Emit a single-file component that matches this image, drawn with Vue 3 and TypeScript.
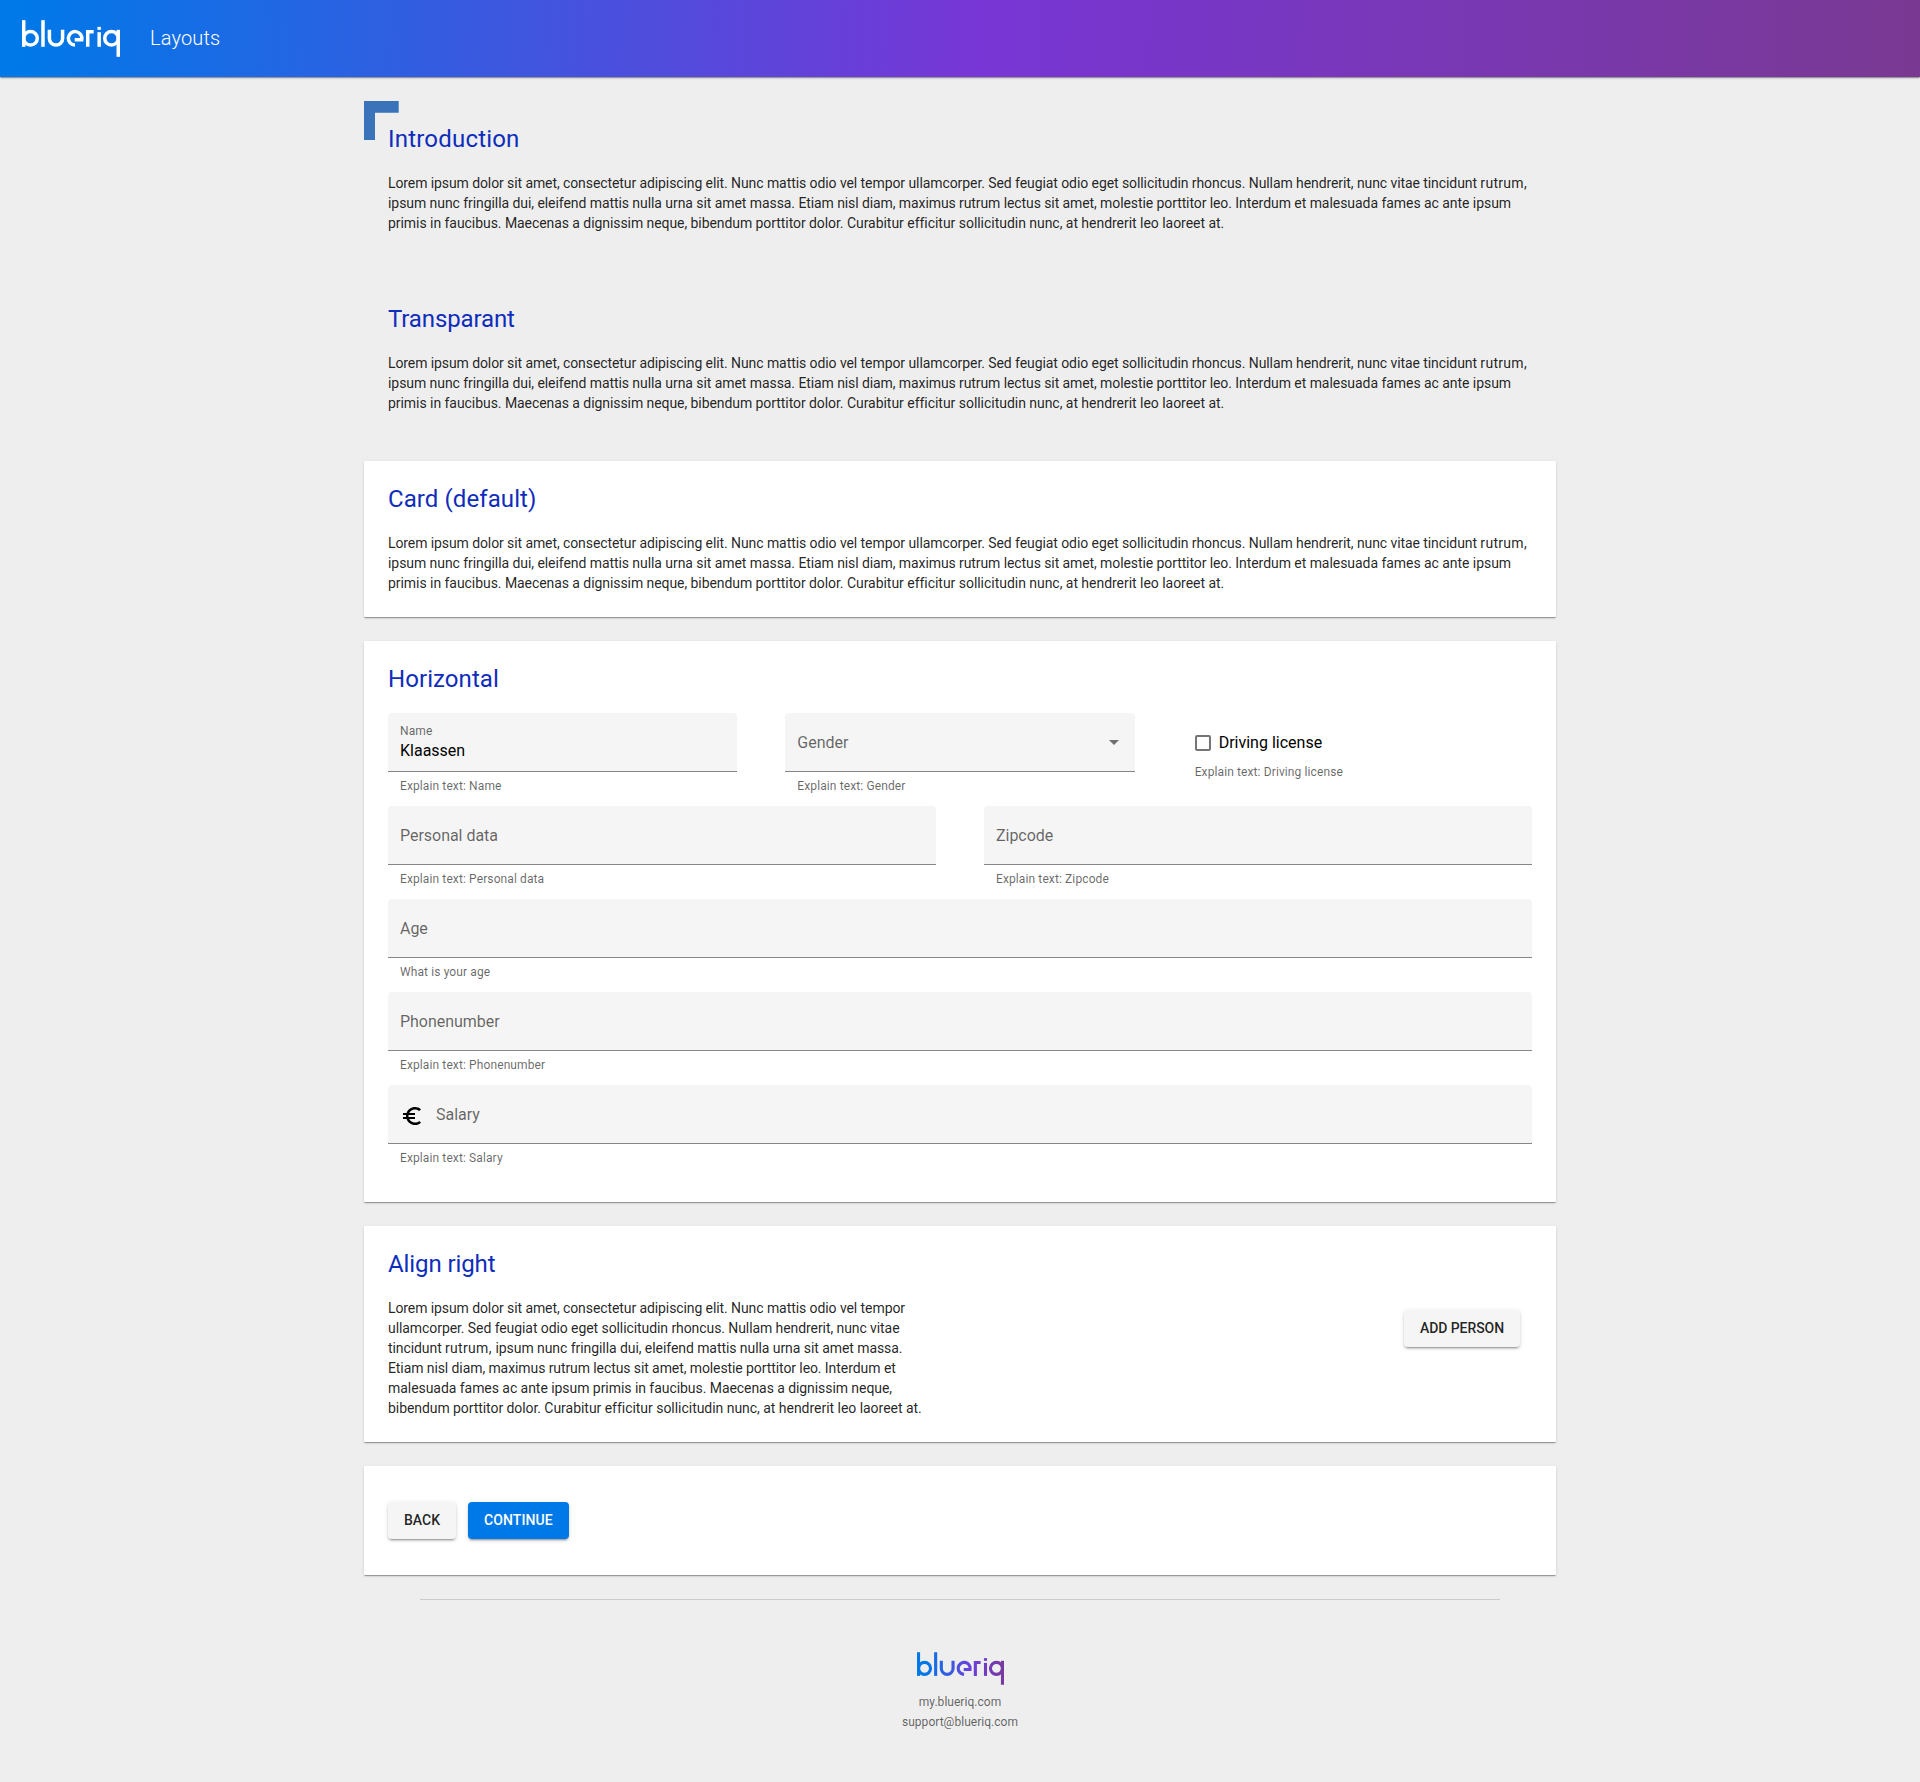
<script setup lang="ts">
interface Field {
  label: string
  hint: string
  value?: string
  kind?: 'select' | 'checkbox' | 'euro'
}

interface Run {
  text: string
  tracking: number
}

// Body copy in short runs, each with its own tracking in pixels.
const lorem: Run[] = [
  { text: 'Lorem ipsum dolor sit amet, consectetur adipiscing elit. ', tracking: -0.092 },
  { text: 'Nunc mattis odio vel tempor ullamcorper. ', tracking: -0.075 },
  { text: 'Sed feugiat odio eget sollicitudin rhoncus. ', tracking: -0.08 },
  { text: 'Nullam hendrerit, nunc vitae tincidunt ', tracking: -0.08 },
  { text: 'rutrum, ', tracking: 0.3 },
  { text: 'ipsum nunc fringilla dui, eleifend mattis nulla urna sit amet massa. ', tracking: -0.066 },
  { text: 'Etiam nisl diam, maximus rutrum lectus sit amet, molestie porttitor leo. ', tracking: -0.09 },
  { text: 'Interdum et malesuada fames ac ante ipsum primis in faucibus. ', tracking: -0.05 },
  { text: 'Maecenas a dignissim neque, bibendum porttitor dolor. ', tracking: -0.068 },
  { text: 'Curabitur efficitur sollicitudin nunc, at hendrerit leo laoreet at.', tracking: -0.033 },
]

const textSections = [
  { title: 'Introduction', style: 'introduction', tracking: 0.2 },
  { title: 'Transparant', style: 'transparent', tracking: -0.13 },
  { title: 'Card (default)', style: 'card', tracking: 0.09 },
]

const rows: Field[][] = [
  [
    { label: 'Name', hint: 'Explain text: Name', value: 'Klaassen' },
    { label: 'Gender', hint: 'Explain text: Gender', kind: 'select' },
    { label: 'Driving license', hint: 'Explain text: Driving license', kind: 'checkbox' },
  ],
  [
    { label: 'Personal data', hint: 'Explain text: Personal data' },
    { label: 'Zipcode', hint: 'Explain text: Zipcode' },
  ],
  [{ label: 'Age', hint: 'What is your age' }],
  [{ label: 'Phonenumber', hint: 'Explain text: Phonenumber' }],
  [{ label: 'Salary', hint: 'Explain text: Salary', kind: 'euro' }],
]
</script>

<template>
  <svg class="defs" width="0" height="0" aria-hidden="true">
    <defs>
      <linearGradient id="brand" gradientUnits="userSpaceOnUse" x1="66" y1="0" x2="360" y2="0">
        <stop offset="0.1" stop-color="#0079e8" />
        <stop offset="0.62" stop-color="#6a3fdc" />
        <stop offset="1" stop-color="#793a9c" />
      </linearGradient>
      <symbol id="logo" viewBox="66 60 294 110">
        <g fill="none" stroke-width="10.5">
          <path d="M71.2 60V140" />
          <circle cx="91.5" cy="114.5" r="20.3" />
          <path d="M129 60V140" />
          <path d="M148.2 89V115a19.8 19.8 0 0 0 39.6 0V89" />
          <path d="M224 118.5H245.3A20.3 20.3 0 1 0 225 134.8" />
          <path d="M263.2 140V94.5H281" />
          <path d="M297.5 96V140" />
          <path d="M297.5 80V89" />
          <circle cx="334.5" cy="114.5" r="20.3" />
          <path d="M354.8 89V170" />
        </g>
      </symbol>
    </defs>
  </svg>

  <div class="page">
    <header class="toolbar">
      <svg class="logo"><use href="#logo" /></svg>
      <span class="app-title">Layouts</span>
    </header>

    <main class="content">
      <section v-for="s in textSections" :key="s.title" class="section" :class="s.style">
        <h2 :style="{ letterSpacing: s.tracking + 'px' }">{{ s.title }}</h2>
        <p>
          <span v-for="run in lorem" :key="run.text" :style="{ letterSpacing: run.tracking + 'px' }">{{ run.text }}</span>
        </p>
      </section>

      <section class="section card">
        <h2>Horizontal</h2>
        <div v-for="(row, i) in rows" :key="i" class="row">
          <div v-for="f in row" :key="f.label" class="cell">
            <template v-if="f.kind === 'checkbox'">
              <label class="check"><span class="box"></span>{{ f.label }}</label>
              <div class="hint check-hint">{{ f.hint }}</div>
            </template>
            <template v-else>
              <div class="field" :class="{ filled: f.value }">
                <svg v-if="f.kind === 'euro'" class="euro" viewBox="0 0 24 24">
                  <path
                    d="M15 18.5c-2.51 0-4.68-1.42-5.76-3.5H15v-2H8.58c-.05-.33-.08-.66-.08-1s.03-.67.08-1H15V9H9.24C10.32 6.92 12.5 5.5 15 5.5c1.61 0 3.09.59 4.23 1.57L21 5.3C19.41 3.87 17.3 3 15 3c-3.92 0-7.24 2.51-8.48 6H3v2h3.06c-.04.33-.06.66-.06 1s.02.67.06 1H3v2h3.52c1.24 3.49 4.56 6 8.48 6 2.31 0 4.41-.87 6-2.3l-1.78-1.77c-1.13.98-2.6 1.57-4.22 1.57z"
                  />
                </svg>
                <div class="texts">
                  <span class="label">{{ f.label }}</span>
                  <span v-if="f.value" class="value">{{ f.value }}</span>
                </div>
                <span v-if="f.kind === 'select'" class="arrow"></span>
              </div>
              <div class="hint">{{ f.hint }}</div>
            </template>
          </div>
        </div>
      </section>

      <section class="section card">
        <h2 class="tight">Align right</h2>
        <div class="row">
          <p class="cell">
            <span v-for="run in lorem" :key="run.text" :style="{ letterSpacing: run.tracking + 'px' }">{{ run.text }}</span>
          </p>
          <div class="cell right"><button class="btn add">ADD PERSON</button></div>
        </div>
      </section>

      <section class="section card actions">
        <button class="btn">BACK</button>
        <button class="btn primary">CONTINUE</button>
      </section>
    </main>

    <footer class="footer">
      <svg class="logo"><use href="#logo" /></svg>
      <span>my.blueriq.com</span>
      <span>support@blueriq.com</span>
    </footer>
  </div>
</template>

<style>
body {
  margin: 0;
  background: #eee;
}
</style>

<style scoped>
.defs {
  position: absolute;
}
.page {
  min-height: 1782px;
  background: #eee;
  font-family: Roboto, sans-serif;
  font-size: 14px;
  line-height: 20px;
  color: rgba(0, 0, 0, 0.87);
}
.toolbar {
  display: flex;
  align-items: center;
  box-sizing: border-box;
  height: 77px;
  padding-left: 22px;
  background: linear-gradient(92deg, #0079e8 1%, #7836d6 51%, #793992 100%);
  box-shadow: 0 2px 1px -1px rgba(0, 0, 0, 0.2), 0 1px 1px 0 rgba(0, 0, 0, 0.14),
    0 1px 3px 0 rgba(0, 0, 0, 0.12);
}
.toolbar .logo {
  width: 98px;
  height: 37px;
  stroke: #fff;
}
.app-title {
  margin-left: 30px;
  padding-bottom: 2px;
  font-size: 20px;
  font-weight: 300;
  letter-spacing: 0.15px;
  color: #fff;
}
.content {
  display: flex;
  flex-direction: column;
  gap: 24px;
  width: 1192px;
  margin: 24px auto 0;
}
.section {
  position: relative;
  padding: 24px;
}
.card {
  background: #fff;
  border-radius: 1px;
  box-shadow: 0 2px 1px -1px rgba(0, 0, 0, 0.2), 0 1px 1px 0 rgba(0, 0, 0, 0.14),
    0 1px 3px 0 rgba(0, 0, 0, 0.12);
}
.introduction::before {
  content: '';
  position: absolute;
  left: 0;
  top: 0;
  width: 35px;
  height: 39px;
  background: #3a73ba;
  clip-path: polygon(0 0, 34.7px 0, 34.7px 11.7px, 11px 11.7px, 11px 39px, 0 39px);
}
h2 {
  margin: 0 0 20px;
  font-size: 24px;
  font-weight: 400;
  line-height: 28px;
  letter-spacing: 0.07px;
  color: #0f2dbc;
}
.tight {
  letter-spacing: -0.1px;
}
p {
  margin: 0;
}
.row {
  display: flex;
  gap: 48px;
}
.cell {
  flex: 1 1 0;
  min-width: 0;
}
.field {
  display: flex;
  align-items: center;
  box-sizing: border-box;
  height: 59px;
  padding: 1px 12px 0;
  background: #f5f5f5;
  border-bottom: 1px solid #868686;
  border-radius: 4px 4px 0 0;
}
.filled {
  padding: 0 12px 2px;
}
.texts {
  display: flex;
  flex: 1;
  flex-direction: column;
}
.label {
  font-size: 16px;
  letter-spacing: -0.03px;
  color: rgba(0, 0, 0, 0.6);
}
.filled .label {
  font-size: 12px;
  letter-spacing: 0.12px;
}
.value {
  font-size: 16px;
  color: #000;
}
.arrow {
  margin-right: 4px;
  border: 5px solid transparent;
  border-top-color: rgba(0, 0, 0, 0.54);
  border-bottom: 0;
}
.euro {
  width: 24px;
  height: 24px;
  margin: 3px 12px 0 0;
  fill: #000;
}
.hint {
  height: 34px;
  padding: 4px 12px 0;
  box-sizing: border-box;
  font-size: 12px;
  letter-spacing: 0.11px;
  color: rgba(0, 0, 0, 0.6);
}
.check {
  display: flex;
  align-items: center;
  gap: 8px;
  padding: 20px 12px 0;
  font-size: 16px;
  color: #000;
}
.box {
  box-sizing: border-box;
  width: 16px;
  height: 16px;
  border: 2px solid rgba(0, 0, 0, 0.54);
  border-radius: 2px;
}
.check-hint {
  padding-top: 9px;
}
.right {
  display: flex;
  align-items: flex-start;
  justify-content: flex-end;
  padding: 12px 12px 0 0;
}
.actions {
  display: flex;
  gap: 12px;
  padding: 36px 24px;
}
.btn {
  height: 37px;
  padding: 0 16px 1px;
  border: 0;
  border-radius: 4px;
  background: #f5f5f5;
  color: rgba(0, 0, 0, 0.87);
  font: 500 14px Roboto, sans-serif;
  box-shadow: 0 3px 1px -2px rgba(0, 0, 0, 0.2), 0 2px 2px 0 rgba(0, 0, 0, 0.14),
    0 1px 5px 0 rgba(0, 0, 0, 0.12);
}
.add {
  letter-spacing: -0.08px;
}
.primary {
  background: #0079e8;
  letter-spacing: 0.1px;
  color: #fff;
}
.footer {
  display: flex;
  flex-direction: column;
  align-items: center;
  width: 1080px;
  margin: 24px auto 0;
  padding-top: 52px;
  border-top: 1px solid #cbcbcb;
  font-size: 12px;
  letter-spacing: 0.03px;
  color: rgba(0, 0, 0, 0.6);
}
.footer .logo {
  width: 87px;
  height: 33px;
  margin-bottom: 7px;
  stroke: url(#brand);
}
</style>
